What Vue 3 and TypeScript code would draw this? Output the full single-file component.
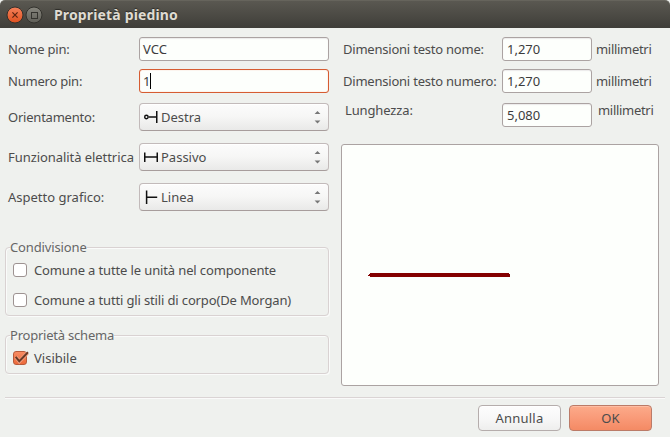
<script setup lang="ts">
import { ref } from 'vue'

const pinName = ref('VCC')
const pinNumber = ref('1')
const nameSize = ref('1,270')
const numberSize = ref('1,270')
const pinLength = ref('5,080')
const shareUnits = ref(false)
const shareStyles = ref(false)
const visible = ref(true)

interface Choice {
  label: string
  value: string
  path: string
  circle?: boolean
  tracking: string
}

const choices: Choice[] = [
  { label: 'Orientamento:', value: 'Destra', path: 'M4.5 7H12.5M12.75 1V13', circle: true, tracking: 't2' },
  { label: 'Funzionalità elettrica', value: 'Passivo', path: 'M.75 2.5V12M1 7H13.5M13.25 2.5V12', tracking: 't05' },
  { label: 'Aspetto grafico:', value: 'Linea', path: 'M2.6 .5V14M3 7.25H13.2', tracking: 't0' },
]
</script>

<template>
  <div class="dialog">
    <header class="titlebar">
      <svg class="winbtn" viewBox="0 0 18 18">
        <defs>
          <linearGradient id="closeFill" x1="0" y1="0" x2="0" y2="1">
            <stop offset="0" stop-color="#f4815b" />
            <stop offset="1" stop-color="#e0511f" />
          </linearGradient>
        </defs>
        <circle cx="9" cy="9" r="8" fill="url(#closeFill)" stroke="#33302b" />
        <path d="M6.4 6.4l5.2 5.2M11.6 6.4l-5.2 5.2" stroke="#5b2411" stroke-width="1.2" />
      </svg>
      <svg class="winbtn" viewBox="0 0 18 18">
        <defs>
          <linearGradient id="maxFill" x1="0" y1="0" x2="0" y2="1">
            <stop offset="0" stop-color="#87867e" />
            <stop offset="1" stop-color="#5f5e57" />
          </linearGradient>
        </defs>
        <circle cx="9" cy="9" r="8" fill="url(#maxFill)" stroke="#33322d" />
        <rect x="6.5" y="6.5" width="6" height="6" fill="none" stroke="#34332e" />
      </svg>
      <h1>Proprietà piedino</h1>
    </header>

    <main class="content">
      <section class="left">
        <div class="row">
          <label class="t2">Nome pin:</label>
          <div class="field">{{ pinName }}</div>
        </div>
        <div class="row">
          <label class="t2">Numero pin:</label>
          <div class="field focused">{{ pinNumber }}<i class="caret"></i></div>
        </div>
        <div v-for="c in choices" :key="c.label" class="row choice">
          <label :class="c.tracking">{{ c.label }}</label>
          <button class="select" type="button">
            <svg class="glyph" viewBox="0 0 15 15">
              <circle v-if="c.circle" cx="2.4" cy="7" r="1.7" fill="none" stroke="#111" stroke-width="1.4" />
              <path :d="c.path" fill="none" stroke="#111" stroke-width="1.5" />
            </svg>
            <span>{{ c.value }}</span>
            <svg class="arrows" viewBox="0 0 7 13">
              <path d="M3.5 0L6.4 3H.6zM3.5 12.5L6.4 9.5H.6z" fill="#777" />
            </svg>
          </button>
        </div>

        <fieldset class="group share">
          <legend>Condivisione</legend>
          <div class="check" @click="shareUnits = !shareUnits">
            <span class="box" :class="{ on: shareUnits }"></span>
            <span>Comune a tutte le unità nel componente</span>
          </div>
          <div class="check" @click="shareStyles = !shareStyles">
            <span class="box" :class="{ on: shareStyles }"></span>
            <span class="t1">Comune a tutti gli stili di corpo(De Morgan)</span>
          </div>
        </fieldset>

        <fieldset class="group schema">
          <legend class="t2">Proprietà schema</legend>
          <div class="check" @click="visible = !visible">
            <span class="box" :class="{ on: visible }">
              <svg v-if="visible" class="tick" viewBox="0 0 16 14">
                <path d="M3 6.2L6.3 10.4L14.4 2" fill="none" stroke="#f3a183" stroke-width="3.6" />
                <path d="M2.7 5.8L6.3 10.2L15 1.2" fill="none" stroke="#6a3a26" stroke-width="2" />
              </svg>
            </span>
            <span class="t0">Visibile</span>
          </div>
        </fieldset>
      </section>

      <section class="right">
        <div class="row">
          <label class="t2">Dimensioni testo nome:</label>
          <div class="field num">{{ nameSize }}</div>
          <span class="unit">millimetri</span>
        </div>
        <div class="row">
          <label class="t2">Dimensioni testo numero:</label>
          <div class="field num">{{ numberSize }}</div>
          <span class="unit">millimetri</span>
        </div>
        <div class="row length">
          <label>Lunghezza:</label>
          <div class="field num">{{ pinLength }}</div>
          <span class="unit">millimetri</span>
        </div>
        <div class="preview">
          <svg viewBox="0 0 316 240" shape-rendering="crispEdges">
            <path d="M28 128H167V129H168V132H28V131H26V130H28Z" fill="#840000" />
            <path d="M27 129H168V131H27Z" fill="#840000" />
          </svg>
        </div>
      </section>
    </main>

    <footer class="actions">
      <button class="btn" type="button">Annulla</button>
      <button class="btn ok" type="button">OK</button>
    </footer>
  </div>
</template>

<style>
body {
  background: #eff1ee;
}
</style>

<style scoped>
.dialog,
.dialog * {
  box-sizing: border-box;
}
.dialog {
  width: 670px;
  height: 437px;
  display: flex;
  flex-direction: column;
  background: #eff1ee;
  color: #4c4c4c;
  font: 13px/18px 'Noto Sans', sans-serif;
  letter-spacing: -0.13px;
  white-space: nowrap;
  overflow: hidden;
}
.titlebar {
  height: 28px;
  flex: none;
  display: flex;
  align-items: center;
  gap: 1px;
  padding: 0 0 0 6px;
  background: linear-gradient(#5a5851, #3f3e39);
  border-top: 1px solid #66645c;
  border-radius: 5px 5px 0 0;
}
.winbtn {
  width: 18px;
  height: 18px;
}
h1 {
  margin: 0 0 0 10px;
  font-size: 14px;
  line-height: 20px;
  font-weight: 700;
  letter-spacing: 0.15px;
  color: #dfdbd2;
  text-shadow: 0 -1px 1px #2c2b27;
}
.content {
  flex: none;
  height: 369px;
  display: flex;
  gap: 12px;
  padding: 9px 11px 0 5px;
}
.left {
  width: 324px;
  display: flex;
  flex-direction: column;
}
.right {
  width: 318px;
  display: flex;
  flex-direction: column;
}
.row {
  display: flex;
  align-items: center;
  height: 24px;
  margin-bottom: 8px;
}
.row label {
  flex: none;
  width: 134px;
  padding-left: 3px;
}
.row.choice {
  height: 28px;
  margin: 2px 0 10px;
}
.right .row label {
  width: 161px;
  padding-left: 2px;
}
.right .length {
  margin: 2px 0 17px;
}
.right .length label {
  padding-left: 4px;
  transform: translateY(-5px);
}
.t2 {
  letter-spacing: -0.22px;
}
.t1 {
  letter-spacing: -0.14px;
}
.t0 {
  letter-spacing: 0;
}
.t05 {
  letter-spacing: -0.06px;
}
.field {
  display: flex;
  align-items: center;
  width: 190px;
  height: 24px;
  padding: 0 3px;
  border: 1px solid #aba3a2;
  border-radius: 3px;
  background: #fdfffc;
  color: #3c3c3c;
  box-shadow: inset 0 1px 1px #eceaea;
  letter-spacing: 0;
}
.field.focused {
  border-color: #d65c32;
  box-shadow: inset 0 0 1px #ed9b7d;
}
.field.num {
  width: 90px;
  padding: 0 4px;
}
.caret {
  width: 1px;
  height: 16px;
  background: #000;
}
.unit {
  margin-left: 4px;
  letter-spacing: -0.3px;
}
.length .unit {
  margin-left: 6px;
  transform: translateY(-5px);
}
.select {
  display: flex;
  align-items: center;
  width: 190px;
  height: 28px;
  padding: 0 7px 0 4px;
  border: 1px solid #c2baba;
  border-bottom-color: #a79d9c;
  border-radius: 4px;
  background: linear-gradient(#fcfcfc, #f6f6f5 50%, #e9e9e8);
  color: #4c4c4c;
  font: inherit;
  letter-spacing: 0;
  box-shadow: inset 0 1px #fff;
}
.glyph {
  width: 15px;
  height: 15px;
  margin-right: 2px;
}
.arrows {
  width: 7px;
  height: 13px;
  margin-left: auto;
  margin-top: 1px;
}
.group {
  min-width: 0;
  width: 324px;
  margin: 0;
  padding: 0 0 0 7px;
  border: 1px solid #d9d2d2;
  border-radius: 4px;
  box-shadow: 1px 1px #fafbfa, inset 1px 1px #fafbfa;
}
.group legend {
  height: 18px;
  margin-left: -3px;
  padding: 0;
  color: #666;
}
.share {
  height: 78px;
  margin-top: 17px;
}
.schema {
  height: 48px;
  margin-top: 10px;
}
.check {
  display: flex;
  align-items: center;
  gap: 7px;
  height: 18px;
  margin-top: 5px;
}
.check + .check {
  margin-top: 12px;
}
.box {
  position: relative;
  width: 14px;
  height: 14px;
  border: 1px solid #9d9291;
  border-radius: 3px;
  background: #fff;
}
.box.on {
  border-color: #b85b3b;
  background: linear-gradient(#f88c63, #ec6a3b);
}
.tick {
  position: absolute;
  left: -1px;
  top: -1px;
  width: 16px;
  height: 14px;
  overflow: visible;
}
.preview {
  flex: none;
  width: 318px;
  height: 242px;
  border: 1px solid #aba3a2;
  border-radius: 3px;
  background: #fdfffc;
}
.preview svg {
  display: block;
  width: 316px;
  height: 240px;
}
.actions {
  display: flex;
  justify-content: flex-end;
  gap: 8px;
  margin: 0 5px;
  padding: 7px 13px 0 0;
  border-top: 1px solid #dad4d4;
  box-shadow: inset 0 1px #fafafa;
}
.btn {
  width: 83px;
  height: 26px;
  padding: 0;
  border: 1px solid #b5adac;
  border-radius: 4px;
  background: linear-gradient(#fdfdfd, #f8f8f8 50%, #eeeeed);
  color: #4c4c4c;
  font: inherit;
  letter-spacing: 0.2px;
  box-shadow: inset 0 1px #fff;
}
.btn.ok {
  border-color: #bb7b68;
  background: linear-gradient(#fcab8a, #f99a78 50%, #f48a64);
  box-shadow: inset 0 1px #ffbea4;
}
</style>
